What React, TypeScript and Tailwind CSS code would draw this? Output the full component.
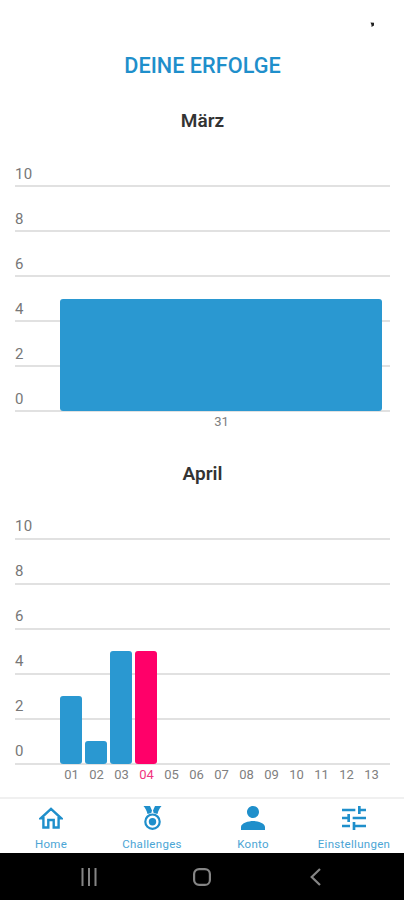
import { MdPerson, MdTune } from "react-icons/md";

type Day = { label: string; value: number; active?: boolean };

const march: Day[] = [{ label: "31", value: 5 }];

const april: Day[] = [
  { label: "01", value: 3 },
  { label: "02", value: 1 },
  { label: "03", value: 5 },
  { label: "04", value: 5, active: true },
  { label: "05", value: 0 },
  { label: "06", value: 0 },
  { label: "07", value: 0 },
  { label: "08", value: 0 },
  { label: "09", value: 0 },
  { label: "10", value: 0 },
  { label: "11", value: 0 },
  { label: "12", value: 0 },
  { label: "13", value: 0 },
];

const steps = [10, 8, 6, 4, 2, 0];

function House() {
  return (
    <svg className="h-[22px] w-6" viewBox="0 0 24 22" fill="none" stroke="currentColor" strokeWidth="2.400">
      <path d="M1.800 11.300H4.400V20.500H9.300V13H14.700V20.500H19.600V11.300H22.200L12 1.800z" />
    </svg>
  );
}

function Medal() {
  return (
    <svg className="ml-[1px] h-6 w-[19px]" viewBox="0 0 19 24" fill="none">
      <path d="M0.500 0H7L9 4.500L8.300 7L4.500 8C3.800 4.500 2.500 2.500 0.500 0zM18.500 0H12L10 4.500L10.700 7L14.500 8C15.200 4.500 16.500 2.500 18.500 0z" fill="#1f8fcb" />
      <circle cx="9.500" cy="15.700" r="7.200" stroke="#1f8fcb" strokeWidth="2.200" />
      <circle cx="9.500" cy="15.700" r="3.700" fill="#1f8fcb" />
    </svg>
  );
}

function Chart({ title, days }: { title: string; days: Day[] }) {
  return (
    <section className="h-[352.5px] pr-[14px] pl-[15px]">
      <h2 className="h-[34px] text-center text-[19px] leading-[26px] font-semibold text-[#333]">{title}</h2>
      <div className="grid">
        <div className="col-start-1 row-start-1">
          {steps.map((step) => (
            <div key={step} className="flex h-[45px] items-end border-b-2 border-[#e1e1e1]">
              <span className="pb-[1.5px] text-[15px] leading-5 tracking-[0.3px] text-[#777]">{step}</span>
            </div>
          ))}
        </div>
        <div className="col-start-1 row-start-1 mr-[6.5px] mb-[1px] ml-[43.5px] flex items-end">
          {days.map((day) => (
            <div key={day.label} className="flex flex-1 pr-[1.5px] pl-[1.2px]">
              <div
                className={day.active ? "flex-1 rounded-[3px] bg-[#ff0069]" : "flex-1 rounded-[3px] bg-[#2a98d1]"}
                style={{ height: day.value * 22.5 }}
              />
            </div>
          ))}
        </div>
      </div>
      <div className="mr-[6px] ml-[44px] flex pt-[2px] text-[13px] leading-4 text-[#808080]">
        {days.map((day) => (
          <span key={day.label} className={day.active ? "flex-1 text-center text-[#f0357f]" : "flex-1 text-center"}>
            {day.label}
          </span>
        ))}
      </div>
    </section>
  );
}

const tabs = [
  { name: "Home", icon: <House /> },
  { name: "Challenges", icon: <Medal /> },
  { name: "Konto", icon: <MdPerson className="size-9" /> },
  { name: "Einstellungen", icon: <MdTune className="size-8" /> },
];

export default function App() {
  return (
    <div className="flex h-[900px] w-[404px] flex-col overflow-hidden bg-white font-['Roboto',sans-serif]">
      <div className="flex h-[50px] shrink-0 justify-end pt-[22px] pr-[29px]">
        <svg className="h-[6px] w-[5px]" viewBox="0 0 5 6">
          <path d="M0.500 0.500L4 0.800V3.500L1.500 5L1.500 3z" fill="#222" />
        </svg>
      </div>
      <h1 className="h-[58px] shrink-0 pl-[1px] text-center text-[21.7px] leading-[31px] font-medium text-[#1f8fcb]">
        DEINE ERFOLGE
      </h1>
      <main className="h-[689px] shrink-0 overflow-hidden">
        <Chart title="März" days={march} />
        <Chart title="April" days={april} />
      </main>
      <nav className="grid h-[56px] shrink-0 grid-cols-4 border-t-2 border-[#f0f0f0] text-[#1f8fcb]">
        {tabs.map((tab) => (
          <div key={tab.name} className="flex flex-col items-center">
            <div className="flex h-[38px] items-center pl-[1px]">{tab.icon}</div>
            <span className="pl-[1px] text-[11.5px] leading-[14px] tracking-[0.3px] text-[#4ba5d5]">{tab.name}</span>
          </div>
        ))}
      </nav>
      <footer className="flex h-[47px] shrink-0 items-center bg-black text-[#858585]">
        <svg className="ml-[81px] h-[18px] w-4" viewBox="0 0 16 18" stroke="currentColor" strokeWidth="2">
          <path d="M1.500 0v18M8 0v18M14.500 0v18" />
        </svg>
        <svg className="ml-24 size-[18px]" viewBox="0 0 18 18" fill="none" stroke="currentColor" strokeWidth="2.200">
          <rect x="1.100" y="1.100" width="15.800" height="15.800" rx="5" />
        </svg>
        <svg className="ml-[99px] h-[18px] w-[11px]" viewBox="0 0 11 18" fill="none" stroke="currentColor" strokeWidth="2.200">
          <path d="M10 1L1.700 9L10 17" />
        </svg>
      </footer>
    </div>
  );
}
